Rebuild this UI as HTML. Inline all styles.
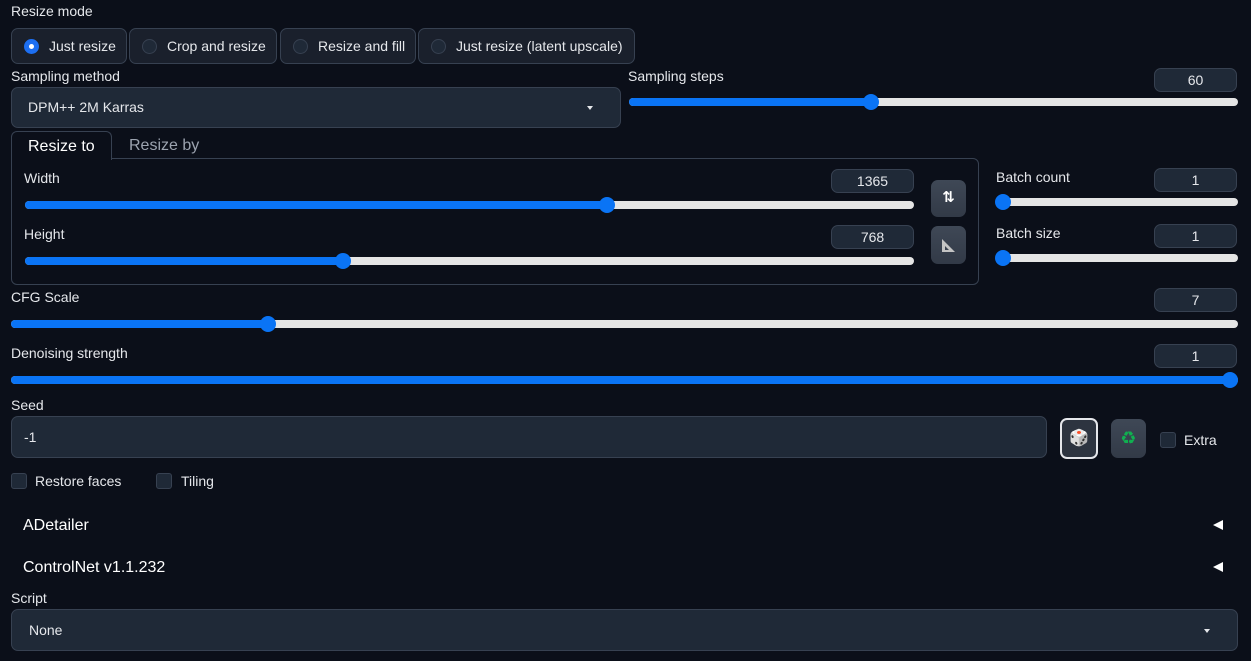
<!DOCTYPE html>
<html><head><meta charset="utf-8"><style>
*{box-sizing:border-box;margin:0;padding:0}
body{width:1251px;height:661px;background:#0b0f19;font-family:"Liberation Sans","DejaVu Sans",sans-serif;color:#e5e7eb;font-size:14px;position:relative;overflow:hidden}
.a{position:absolute}
.lbl{position:absolute;font-size:14px;color:#e5e7eb;line-height:16px}
.box{position:absolute;background:#1f2937;border:1px solid #374151;border-radius:7px}
.num{position:absolute;background:#1f2937;border:1px solid #374151;border-radius:7px;height:24px;width:83px;text-align:center;font-size:14px;line-height:22px;color:#e5e7eb}
.tr{position:absolute;height:8px;border-radius:4px;background:#e5e5e5}
.tr .f{position:absolute;left:0;top:0;height:8px;border-radius:4px;background:#0a74f5}
.tr .t{position:absolute;top:-4px;width:16px;height:16px;border-radius:50%;background:#0a74f5;margin-left:-8px}
.rad{position:absolute;top:28px;height:36px;background:#1a202c;border:1px solid #374151;border-radius:7px;font-size:14px;line-height:34px;padding-left:37px}
.rad i{position:absolute;left:12px;top:10px;width:15px;height:15px;border-radius:50%;background:#1f2937;border:1px solid #374151}
.cb{position:absolute;width:16px;height:16px;background:#1f2937;border:1px solid #374151;border-radius:3px}
.btn{position:absolute;border-radius:7px;background:linear-gradient(#3f4856,#323a47)}
</style></head><body>
<div class="lbl" style="left:11px;top:3px">Resize mode</div>
<div class="rad" style="left:11px;width:116px"><i style="background:#1d6ff2;border-color:#1d6ff2"><b style="position:absolute;left:4px;top:4px;width:5px;height:5px;border-radius:50%;background:#fff"></b></i>Just resize</div>
<div class="rad" style="left:129px;width:148px"><i></i>Crop and resize</div>
<div class="rad" style="left:280px;width:136px"><i></i>Resize and fill</div>
<div class="rad" style="left:418px;width:217px"><i></i>Just resize (latent upscale)</div>

<div class="lbl" style="left:11px;top:68px">Sampling method</div>
<div class="box" style="left:11px;top:87px;width:610px;height:41px;font-size:14px;line-height:39px;padding-left:16px">DPM++ 2M Karras</div>
<div class="a" style="left:587px;top:106px;width:0;height:0;border-left:3.5px solid transparent;border-right:3.5px solid transparent;border-top:4px solid #e5e7eb"></div>

<div class="lbl" style="left:628px;top:68px">Sampling steps</div>
<div class="num" style="left:1154px;top:68px">60</div>
<div class="tr" style="left:629px;top:98px;width:609px"><div class="f" style="width:242px"></div><div class="t" style="left:242px"></div></div>

<div class="a" style="left:11px;top:158px;width:968px;height:127px;border:1px solid #374151;border-radius:0 6px 6px 6px"></div>
<div class="a" style="left:11px;top:131px;width:101px;height:29px;border:1px solid #374151;border-bottom:none;border-radius:6px 6px 0 0;background:#0b0f19;font-size:16px;line-height:29px;padding-left:16px;color:#fff">Resize to</div>
<div class="lbl" style="left:129px;top:137px;font-size:16px;line-height:17px;color:#9ca3af">Resize by</div>

<div class="lbl" style="left:24px;top:170px">Width</div>
<div class="num" style="left:831px;top:169px">1365</div>
<div class="tr" style="left:25px;top:201px;width:889px"><div class="f" style="width:582px"></div><div class="t" style="left:582px"></div></div>
<div class="lbl" style="left:24px;top:226px">Height</div>
<div class="num" style="left:831px;top:225px">768</div>
<div class="tr" style="left:25px;top:257px;width:889px"><div class="f" style="width:318px"></div><div class="t" style="left:318px"></div></div>

<div class="btn" style="left:931px;top:180px;width:35px;height:37px;color:#fff;text-align:center;font-weight:bold;font-size:15px;line-height:36px">⇅</div>
<div class="btn" style="left:931px;top:226px;width:35px;height:38px"><svg width="35" height="38"><path d="M11 13 L24 26 L11 26 Z" fill="#c4c4c4"/><path d="M14 20 L18 24 L14 24 Z" fill="#3a424f"/></svg></div>

<div class="lbl" style="left:996px;top:169px">Batch count</div>
<div class="num" style="left:1154px;top:168px">1</div>
<div class="tr" style="left:1003px;top:198px;width:235px"><div class="t" style="left:0"></div></div>
<div class="lbl" style="left:996px;top:225px">Batch size</div>
<div class="num" style="left:1154px;top:224px">1</div>
<div class="tr" style="left:1003px;top:254px;width:235px"><div class="t" style="left:0"></div></div>

<div class="lbl" style="left:11px;top:289px">CFG Scale</div>
<div class="num" style="left:1154px;top:288px">7</div>
<div class="tr" style="left:11px;top:320px;width:1227px"><div class="f" style="width:257px"></div><div class="t" style="left:257px"></div></div>

<div class="lbl" style="left:11px;top:345px">Denoising strength</div>
<div class="num" style="left:1154px;top:344px">1</div>
<div class="tr" style="left:11px;top:376px;width:1227px"><div class="f" style="width:1227px"></div><div class="t" style="left:1219px"></div></div>

<div class="lbl" style="left:11px;top:397px">Seed</div>
<div class="box" style="left:11px;top:416px;width:1036px;height:42px;line-height:40px;padding-left:12px">-1</div>
<div class="a" style="left:1060px;top:418px;width:38px;height:41px;border:2px solid #e5e7eb;border-radius:7px;background:#2d3440;text-align:center;line-height:37px;font-size:16px">🎲</div>
<div class="btn" style="left:1111px;top:419px;width:35px;height:39px;text-align:center;line-height:38px;font-size:18px;color:#10b050">♻</div>
<div class="cb" style="left:1160px;top:432px"></div>
<div class="lbl" style="left:1184px;top:432px">Extra</div>

<div class="cb" style="left:11px;top:473px"></div>
<div class="lbl" style="left:35px;top:473px">Restore faces</div>
<div class="cb" style="left:156px;top:473px"></div>
<div class="lbl" style="left:181px;top:473px">Tiling</div>

<div class="lbl" style="left:23px;top:517px;font-size:16px;line-height:17px;color:#fff">ADetailer</div>
<div class="a" style="left:1213px;top:520px;width:0;height:0;border-top:5px solid transparent;border-bottom:5px solid transparent;border-right:10px solid #fff"></div>
<div class="lbl" style="left:23px;top:559px;font-size:16px;line-height:17px;color:#fff">ControlNet v1.1.232</div>
<div class="a" style="left:1213px;top:562px;width:0;height:0;border-top:5px solid transparent;border-bottom:5px solid transparent;border-right:10px solid #fff"></div>

<div class="lbl" style="left:11px;top:590px">Script</div>
<div class="box" style="left:11px;top:609px;width:1227px;height:42px;line-height:40px;padding-left:17px">None</div>
<div class="a" style="left:1204px;top:629px;width:0;height:0;border-left:3.5px solid transparent;border-right:3.5px solid transparent;border-top:4px solid #e5e7eb"></div>
</body></html>
